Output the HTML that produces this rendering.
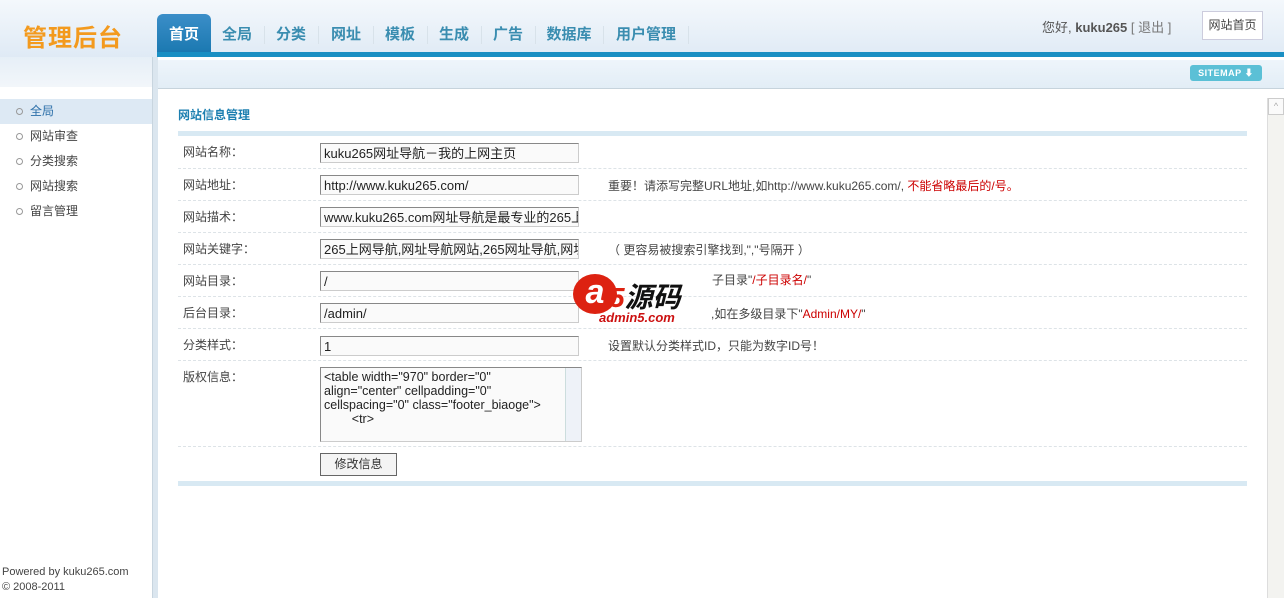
<!DOCTYPE html>
<html><head><meta charset="utf-8"><style>
*{margin:0;padding:0;box-sizing:border-box}
body{width:1284px;height:598px;overflow:hidden;background:#fff;font-family:"Liberation Sans","Noto Sans CJK SC",sans-serif;font-size:12px;color:#333;position:relative}
.hdr{position:absolute;left:0;top:0;width:1284px;height:57px;background:linear-gradient(#f4f8fc,#dfeaf5)}
.logo{position:absolute;left:23px;top:18px;font-size:24px;color:#f39a1e;font-weight:bold;letter-spacing:1px}
.bl{position:absolute;left:157px;top:52px;width:1127px;height:5px;background:#1a8fc3}
.tab{position:absolute;top:14px;left:157px;width:54px;height:40px;background:linear-gradient(#3b8ec8,#1a78b0);border-radius:6px 6px 0 0;color:#fff;font-size:15px;font-weight:bold;text-align:center;line-height:42px}
.nv{position:absolute;top:26px;font-size:15px;font-weight:bold;color:#3a8db0;line-height:18px;transform:translateX(-50%)}
.sep{position:absolute;top:26px;width:1px;height:18px;background:#d8e2ea}
.user{position:absolute;left:1042px;top:17px;font-size:13px;color:#555}
.home{position:absolute;left:1202px;top:11px;width:61px;height:29px;border:1px solid #ccd;background:#fff;font-size:12px;text-align:center;line-height:27px;color:#444}
.sub{position:absolute;left:158px;top:60px;width:1126px;height:29px;background:linear-gradient(#eef5fb,#e2edf6);border-bottom:1px solid #c6d3dc}
.side1{position:absolute;left:0;top:57px;width:152px;height:30px;background:linear-gradient(#e6eff7,#f2f6fa)}
.vline{position:absolute;left:152px;top:57px;width:6px;height:541px;background:#dbe6ef;border-left:1px solid #c8d5df}
.sitemap{position:absolute;left:1190px;top:65px;width:72px;height:16px;background:#5bc0d6;border-radius:3px;color:#fff;font-size:9px;font-weight:bold;text-align:center;line-height:16px;letter-spacing:.5px}
.menu{position:absolute;left:0;top:99px;width:152px}
.menu div{height:25px;line-height:24px;padding-left:30px;font-size:12px;color:#444;position:relative}
.menu div:before{content:"";position:absolute;left:16px;top:9px;width:5px;height:5px;border:1px solid #999;border-radius:50%}
.menu .on{background:#dde9f4;color:#2a6ea8}
.foot{position:absolute;left:2px;top:565px;font-size:11px;color:#444;line-height:15px}
.title{position:absolute;left:178px;top:106px;font-size:12px;font-weight:bold;color:#1c7fb0}
.band{position:absolute;left:178px;width:1069px;height:5px;background:#d8e9f3}
.row{position:absolute;left:178px;width:1069px;border-bottom:1px dashed #dde3e7}
.lab{position:absolute;left:5px;top:7px;color:#444}
.inp{position:absolute;left:142px;width:259px;height:20px;border:1px solid #888;border-right-color:#ccc;border-bottom-color:#ccc;background:#fafafa;font-size:13px;padding:1px 3px;line-height:17px;white-space:nowrap;overflow:hidden;color:#222}
.note{position:absolute;left:430px;color:#444}
.red{color:#c00}
.scroll{position:absolute;left:1267px;top:98px;width:17px;height:500px;background:#f3f3f0;border-left:1px solid #ddd}
</style></head><body>
<div class="hdr"></div>
<div class="logo">管理后台</div>
<div class="tab">首页</div>
<span class="nv" style="left:237px">全局</span><span class="sep" style="left:264px"></span>
<span class="nv" style="left:291px">分类</span><span class="sep" style="left:318px"></span>
<span class="nv" style="left:346px">网址</span><span class="sep" style="left:373px"></span>
<span class="nv" style="left:400px">模板</span><span class="sep" style="left:427px"></span>
<span class="nv" style="left:454px">生成</span><span class="sep" style="left:481px"></span>
<span class="nv" style="left:508px">广告</span><span class="sep" style="left:535px"></span>
<span class="nv" style="left:569px">数据库</span><span class="sep" style="left:603px"></span>
<span class="nv" style="left:646px">用户管理</span><span class="sep" style="left:688px"></span>
<div class="bl"></div>
<div class="user">您好, <b>kuku265</b> <span style="color:#777">[ 退出 ]</span></div>
<div class="home">网站首页</div>
<div class="side1"></div>
<div class="sub"></div>
<div class="vline"></div>
<div class="sitemap">SITEMAP ⬇</div>
<div class="menu"><div class="on">全局</div><div>网站审查</div><div>分类搜索</div><div>网站搜索</div><div>留言管理</div></div>
<div class="foot">Powered by kuku265.com<br>© 2008-2011</div>
<div class="title">网站信息管理</div>
<div class="band" style="top:131px"></div>
<div class="row" style="top:136px;height:33px"><span class="lab">网站名称：</span><div class="inp" style="top:7px">kuku265网址导航－我的上网主页</div></div>
<div class="row" style="top:169px;height:32px"><span class="lab">网站地址：</span><div class="inp" style="top:6px">http://www.kuku265.com/</div><span class="note" style="top:8px">重要！请添写完整URL地址,如http://www.kuku265.com/, <span class="red">不能省略最后的/号。</span></span></div>
<div class="row" style="top:201px;height:32px"><span class="lab">网站描术：</span><div class="inp" style="top:6px">www.kuku265.com网址导航是最专业的265上网导航</div></div>
<div class="row" style="top:233px;height:32px"><span class="lab">网站关键字：</span><div class="inp" style="top:6px">265上网导航,网址导航网站,265网址导航,网址大全</div><span class="note" style="top:8px">（ 更容易被搜索引擎找到,","号隔开 ）</span></div>
<div class="row" style="top:265px;height:32px"><span class="lab">网站目录：</span><div class="inp" style="top:6px">/</div><span class="note" style="top:6px;left:534px">子目录"<span class="red">/子目录名/</span>"</span></div>
<div class="row" style="top:297px;height:32px"><span class="lab">后台目录：</span><div class="inp" style="top:6px">/admin/</div><span class="note" style="top:8px;left:533px">,如在多级目录下"<span class="red">Admin/MY/</span>"</span></div>
<div class="row" style="top:329px;height:32px"><span class="lab">分类样式：</span><div class="inp" style="top:7px">1</div><span class="note" style="top:8px">设置默认分类样式ID，只能为数字ID号！</span></div>
<div class="row" style="top:361px;height:86px"><span class="lab">版权信息：</span><div class="inp" style="top:6px;height:75px;width:262px;white-space:normal;font-size:12.5px;line-height:14px;padding:2px 30px 0 3px">&lt;table width="970" border="0" align="center" cellpadding="0" cellspacing="0" class="footer_biaoge"&gt;<br>&nbsp;&nbsp;&nbsp;&nbsp;&nbsp;&nbsp;&nbsp;&nbsp;&lt;tr&gt;<div style="position:absolute;right:0;top:0;width:16px;height:73px;background:#eef2f8;border-left:1px solid #cdd"></div></div></div>
<div style="position:absolute;left:320px;top:453px;width:77px;height:23px;border:1px solid #666;background:#f4f4f4;text-align:center;line-height:21px">修改信息</div>
<div class="band" style="top:481px"></div>
<div style="position:absolute;left:573px;top:272px;width:140px;height:54px">
<div style="position:absolute;left:0;top:2px;width:44px;height:40px;border-radius:50%;background:#d21;color:#fff;font-size:34px;font-weight:bold;line-height:36px;text-align:center;font-style:italic">a</div>
<div style="position:absolute;left:36px;top:4px;font-size:28px;color:#d21;font-weight:bold;font-style:italic">5<span style="color:#111">源码</span></div>
<div style="position:absolute;left:26px;top:38px;font-size:13px;color:#c11;font-weight:bold;font-style:italic">admin5.com</div></div>
<div class="scroll"><div style="width:16px;height:17px;border:1px solid #ccc;background:#fafafa;color:#aaa;font-size:9px;text-align:center;line-height:15px">^</div></div>
</body></html>
